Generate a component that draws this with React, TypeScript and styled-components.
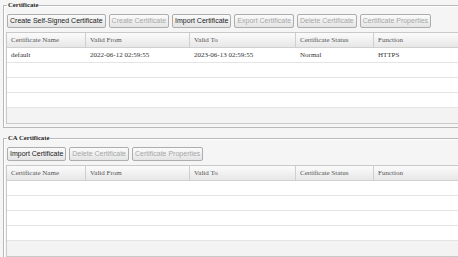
import * as React from "react";
import styled, { createGlobalStyle } from "styled-components";

const GlobalStyle = createGlobalStyle`
  html, body {
    margin: 0;
    padding: 0;
    overflow: hidden;
    background: #f5f5f5;
  }
`;

const Page = styled.div`
  width: 640px;
  padding-top: 0;
  background: #f5f5f5;
`;

const Group = styled.fieldset<{ $gap?: number }>`
  margin: ${p => p.$gap || 0}px 0 0 3px;
  padding: 4px 0 3px 2px;
  border: 1px solid #b9b9b9;
  box-shadow: inset 1px 1px 0 #fff;
  min-width: 0;
`;

const Legend = styled.legend`
  margin-left: 1px;
  padding: 0 1px;
  font: bold 6.7px/10px "Liberation Serif", serif;
  color: #1e1e1e;
`;

const Toolbar = styled.div`
  display: flex;
  gap: 3px;
  margin: 0 0 4px 1px;
`;

const Button = styled.button<{ $disabled?: boolean }>`
  height: 14px;
  padding: 0 2px;
  border: 1px solid #adadad;
  border-radius: 2px;
  background: linear-gradient(#fbfbfb, #e4e4e4);
  font: 7px/12px "Liberation Sans", Arial, sans-serif;
  color: ${p => (p.$disabled ? "#a6a6a6" : "#1a1a1a")};
  white-space: nowrap;
`;

const Grid = styled.div`
  display: grid;
  grid-template-columns: 79px 104px 106px 78px 1fr;
  border: 1px solid #c9c9c9;
  border-right: none;
  background: #fff;
`;

const Head = styled.div`
  height: 14px;
  padding-left: 4px;
  border-right: 1px solid #cfcfcf;
  border-bottom: 1px solid #d0d0d0;
  background: linear-gradient(#fbfbfb, #e7e7e7);
  font: 7px/14px "Liberation Serif", serif;
  color: #555;
  white-space: nowrap;
`;

const Cell = styled.div`
  height: 14px;
  padding-left: 4px;
  border-bottom: 1px solid #e4e4e4;
  font: 7px/14px "Liberation Serif", serif;
  color: #333;
  white-space: nowrap;
`;

const Filler = styled.div`
  grid-column: 1 / -1;
  height: 15px;
  background: #f3f3f3;
`;

const columns = [
  "Certificate Name",
  "Valid From",
  "Valid To",
  "Certificate Status",
  "Function"
];

type Action = { label: string; disabled?: boolean };

const CertTable = ({ rows }: { rows: string[][] }) => {
  const all = [...rows];
  while (all.length < 4) all.push(["", "", "", "", ""]);
  return (
    <Grid>
      {columns.map(c => (
        <Head key={c}>{c}</Head>
      ))}
      {all.map((r, i) =>
        r.map((v, j) => <Cell key={`${i}-${j}`}>{v}</Cell>)
      )}
      <Filler />
    </Grid>
  );
};

const Section = ({
  title,
  actions,
  rows,
  gap
}: {
  title: string;
  actions: Action[];
  rows: string[][];
  gap?: number;
}) => (
  <Group $gap={gap}>
    <Legend>{title}</Legend>
    <Toolbar>
      {actions.map(a => (
        <Button key={a.label} $disabled={a.disabled}>
          {a.label}
        </Button>
      ))}
    </Toolbar>
    <CertTable rows={rows} />
  </Group>
);

export default function App() {
  return (
    <Page>
      <GlobalStyle />
      <Section
        title="Certificate"
        actions={[
          { label: "Create Self-Signed Certificate" },
          { label: "Create Certificate", disabled: true },
          { label: "Import Certificate" },
          { label: "Export Certificate", disabled: true },
          { label: "Delete Certificate", disabled: true },
          { label: "Certificate Properties", disabled: true }
        ]}
        rows={[
          [
            "default",
            "2022-06-12 02:59:55",
            "2023-06-13 02:59:55",
            "Normal",
            "HTTPS"
          ]
        ]}
      />
      <Section
        title="CA Certificate"
        gap={5}
        actions={[
          { label: "Import Certificate" },
          { label: "Delete Certificate", disabled: true },
          { label: "Certificate Properties", disabled: true }
        ]}
        rows={[]}
      />
    </Page>
  );
}
